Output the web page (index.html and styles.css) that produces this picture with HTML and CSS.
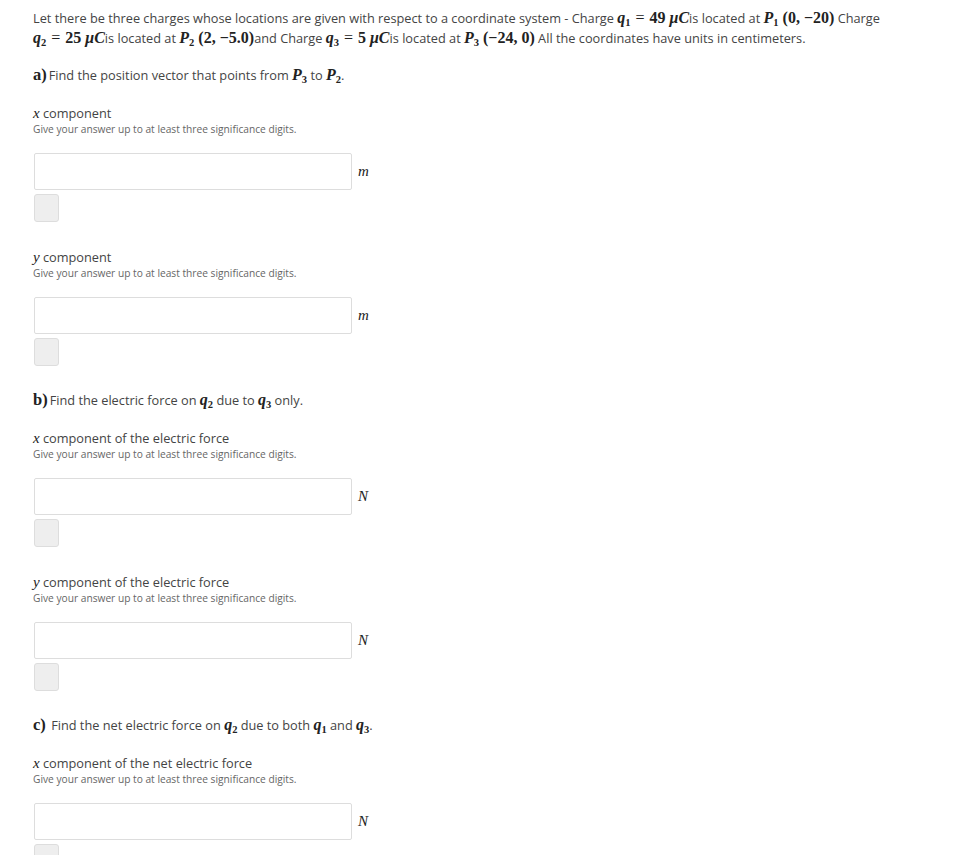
FILE: index.html
```html
<!DOCTYPE html>
<html lang="en">
<head>
  <meta charset="UTF-8" />
  <title>Charges Problem</title>
  <link rel="stylesheet" href="styles.css">
</head>
<body>
  <div class="problem">
    <p class="intro">
      Let there be three charges whose locations are given with respect to a coordinate system - Charge
      <span class="m"><i>q</i><sub>1</sub><span class="eq">=</span>49 <i>μC</i></span>is located at
      <span class="m"><i>P</i><sub>1</sub> (0, −20)</span> Charge
      <span class="m"><i>q</i><sub>2</sub><span class="eq">=</span>25 <i>μC</i></span>is located at
      <span class="m"><i>P</i><sub>2</sub> (2, −5.0)</span>and Charge
      <span class="m"><i>q</i><sub>3</sub><span class="eq">=</span>5 <i>μC</i></span>is located at
      <span class="m"><i>P</i><sub>3</sub> (−24, 0)</span> All the coordinates have units in centimeters.
    </p>

    <!-- part a -->
    <div class="part">
      <div class="part-title"><span class="m b">a)</span>Find the position vector that points from <span class="m"><i>P</i><sub>3</sub></span> to <span class="m"><i>P</i><sub>2</sub></span>.</div>

      <div class="field">
        <div class="label"><span class="m"><i>x</i></span> component</div>
        <div class="hint">Give your answer up to at least three significance digits.</div>
        <div class="answer-row">
          <input type="text" class="answer">
          <span class="unit"><i>m</i></span>
        </div>
        <div class="check"></div>
      </div>

      <div class="field">
        <div class="label"><span class="m"><i>y</i></span> component</div>
        <div class="hint">Give your answer up to at least three significance digits.</div>
        <div class="answer-row">
          <input type="text" class="answer">
          <span class="unit"><i>m</i></span>
        </div>
        <div class="check"></div>
      </div>
    </div>

    <!-- part b -->
    <div class="part">
      <div class="part-title"><span class="m b">b)</span>Find the electric force on <span class="m"><i>q</i><sub>2</sub></span> due to <span class="m"><i>q</i><sub>3</sub></span> only.</div>

      <div class="field">
        <div class="label"><span class="m"><i>x</i></span> component of the electric force</div>
        <div class="hint">Give your answer up to at least three significance digits.</div>
        <div class="answer-row">
          <input type="text" class="answer">
          <span class="unit"><i>N</i></span>
        </div>
        <div class="check"></div>
      </div>

      <div class="field">
        <div class="label"><span class="m"><i>y</i></span> component of the electric force</div>
        <div class="hint">Give your answer up to at least three significance digits.</div>
        <div class="answer-row">
          <input type="text" class="answer">
          <span class="unit"><i>N</i></span>
        </div>
        <div class="check"></div>
      </div>
    </div>

    <!-- part c -->
    <div class="part">
      <div class="part-title"><span class="m b">c)</span> Find the net electric force on <span class="m"><i>q</i><sub>2</sub></span> due to both <span class="m"><i>q</i><sub>1</sub></span> and <span class="m"><i>q</i><sub>3</sub></span>.</div>

      <div class="field">
        <div class="label"><span class="m"><i>x</i></span> component of the net electric force</div>
        <div class="hint">Give your answer up to at least three significance digits.</div>
        <div class="answer-row">
          <input type="text" class="answer">
          <span class="unit"><i>N</i></span>
        </div>
        <div class="check"></div>
      </div>
    </div>
  </div>
</body>
</html>
```

FILE: styles.css
```css
* {
  box-sizing: border-box;
}

body {
  margin: 0;
  font-family: "Open Sans", sans-serif;
  font-size: 12.75px;
  color: #444;
  background: #fff;
}

.problem {
  padding: 8px 33px 0;
}

.intro {
  max-width: 852px;
  margin: 0 0 17px;
  line-height: 20px;
}

.m {
  font-family: "Liberation Serif", serif;
  font-size: 16px;
  font-weight: bold;
  color: #222;
}

.m i {
  font-style: italic;
}

.m sub {
  font-size: 10.5px;
  vertical-align: -3px;
  line-height: 0;
}

.eq {
  font-weight: normal;
  margin: 0 5px;
}

.m.b {
  font-size: 16.5px;
  margin-right: 2px;
}

.part {
  margin-bottom: 24px;
}

.part-title {
  line-height: 20px;
}

.field {
  margin-top: 19px;
}

.field + .field {
  margin-top: 26px;
}

.label {
  line-height: 18px;
}

.label .m {
  font-weight: normal;
  font-size: 15px;
}

.hint {
  font-size: 10.2px;
  color: #666;
  line-height: 15px;
}

.answer-row {
  display: flex;
  align-items: center;
  gap: 4px;
  margin-top: 16px;
}

.answer {
  width: 318px;
  height: 37px;
  border: 1px solid #ddd;
  border-radius: 2px;
  margin: 0 0 0 1px;
  font: inherit;
  padding: 6px 8px;
}

.unit {
  font-family: "Liberation Serif", serif;
  font-size: 15px;
  color: #222;
}

.unit i {
  padding: 0 2px;
}

.check {
  width: 25px;
  height: 28px;
  margin: 4px 0 0 1px;
  background: #eee;
  border: 1px solid #ddd;
  border-radius: 3px;
}
```
